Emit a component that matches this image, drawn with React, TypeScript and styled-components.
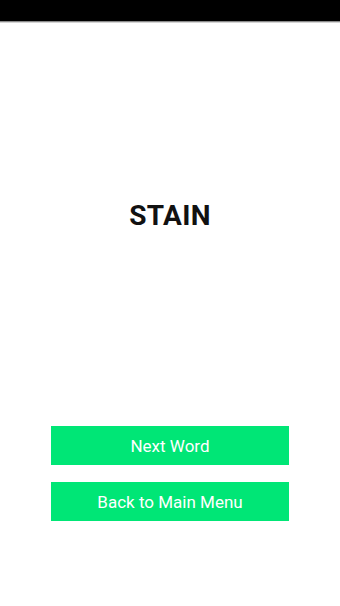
import React from "react";
import styled, { createGlobalStyle } from "styled-components";

const Global = createGlobalStyle`
  html, body { margin: 0; padding: 0; background: #ffffff; }
  body { font-family: Roboto, "Noto Sans", Arial, sans-serif; }
`;

const Screen = styled.div`
  width: 340px;
  height: 606px;
  display: flex;
  flex-direction: column;
  background: #ffffff;
  overflow: hidden;
`;

const StatusBar = styled.div`
  height: 21px;
  flex: none;
  background: #000000;
  box-shadow: 0 1px 0 #8a8a8a, 0 2px 0 #d4d4d4;
`;

const WordArea = styled.div`
  display: flex;
  justify-content: center;
  padding-top: 178px;
`;

const Word = styled.h1`
  margin: 0;
  font-family: Roboto, Arial, sans-serif;
  font-weight: 700;
  font-size: 28px;
  line-height: 33px;
  color: #111111;
  letter-spacing: 0.3px;
`;

const Buttons = styled.div`
  display: flex;
  flex-direction: column;
  gap: 17px;
  padding: 194px 51px 0 51px;
`;

const Button = styled.button`
  height: 39px;
  border: none;
  border-radius: 0;
  background: #00e676;
  color: #ffffff;
  font-family: Roboto, Arial, sans-serif;
  font-size: 17px;
  font-weight: 400;
  cursor: pointer;
  padding: 0;
`;

export default function App() {
  return (
    <>
      <Global />
      <Screen>
        <StatusBar />
        <WordArea>
          <Word>STAIN</Word>
        </WordArea>
        <Buttons>
          <Button>Next Word</Button>
          <Button>Back to Main Menu</Button>
        </Buttons>
      </Screen>
    </>
  );
}
